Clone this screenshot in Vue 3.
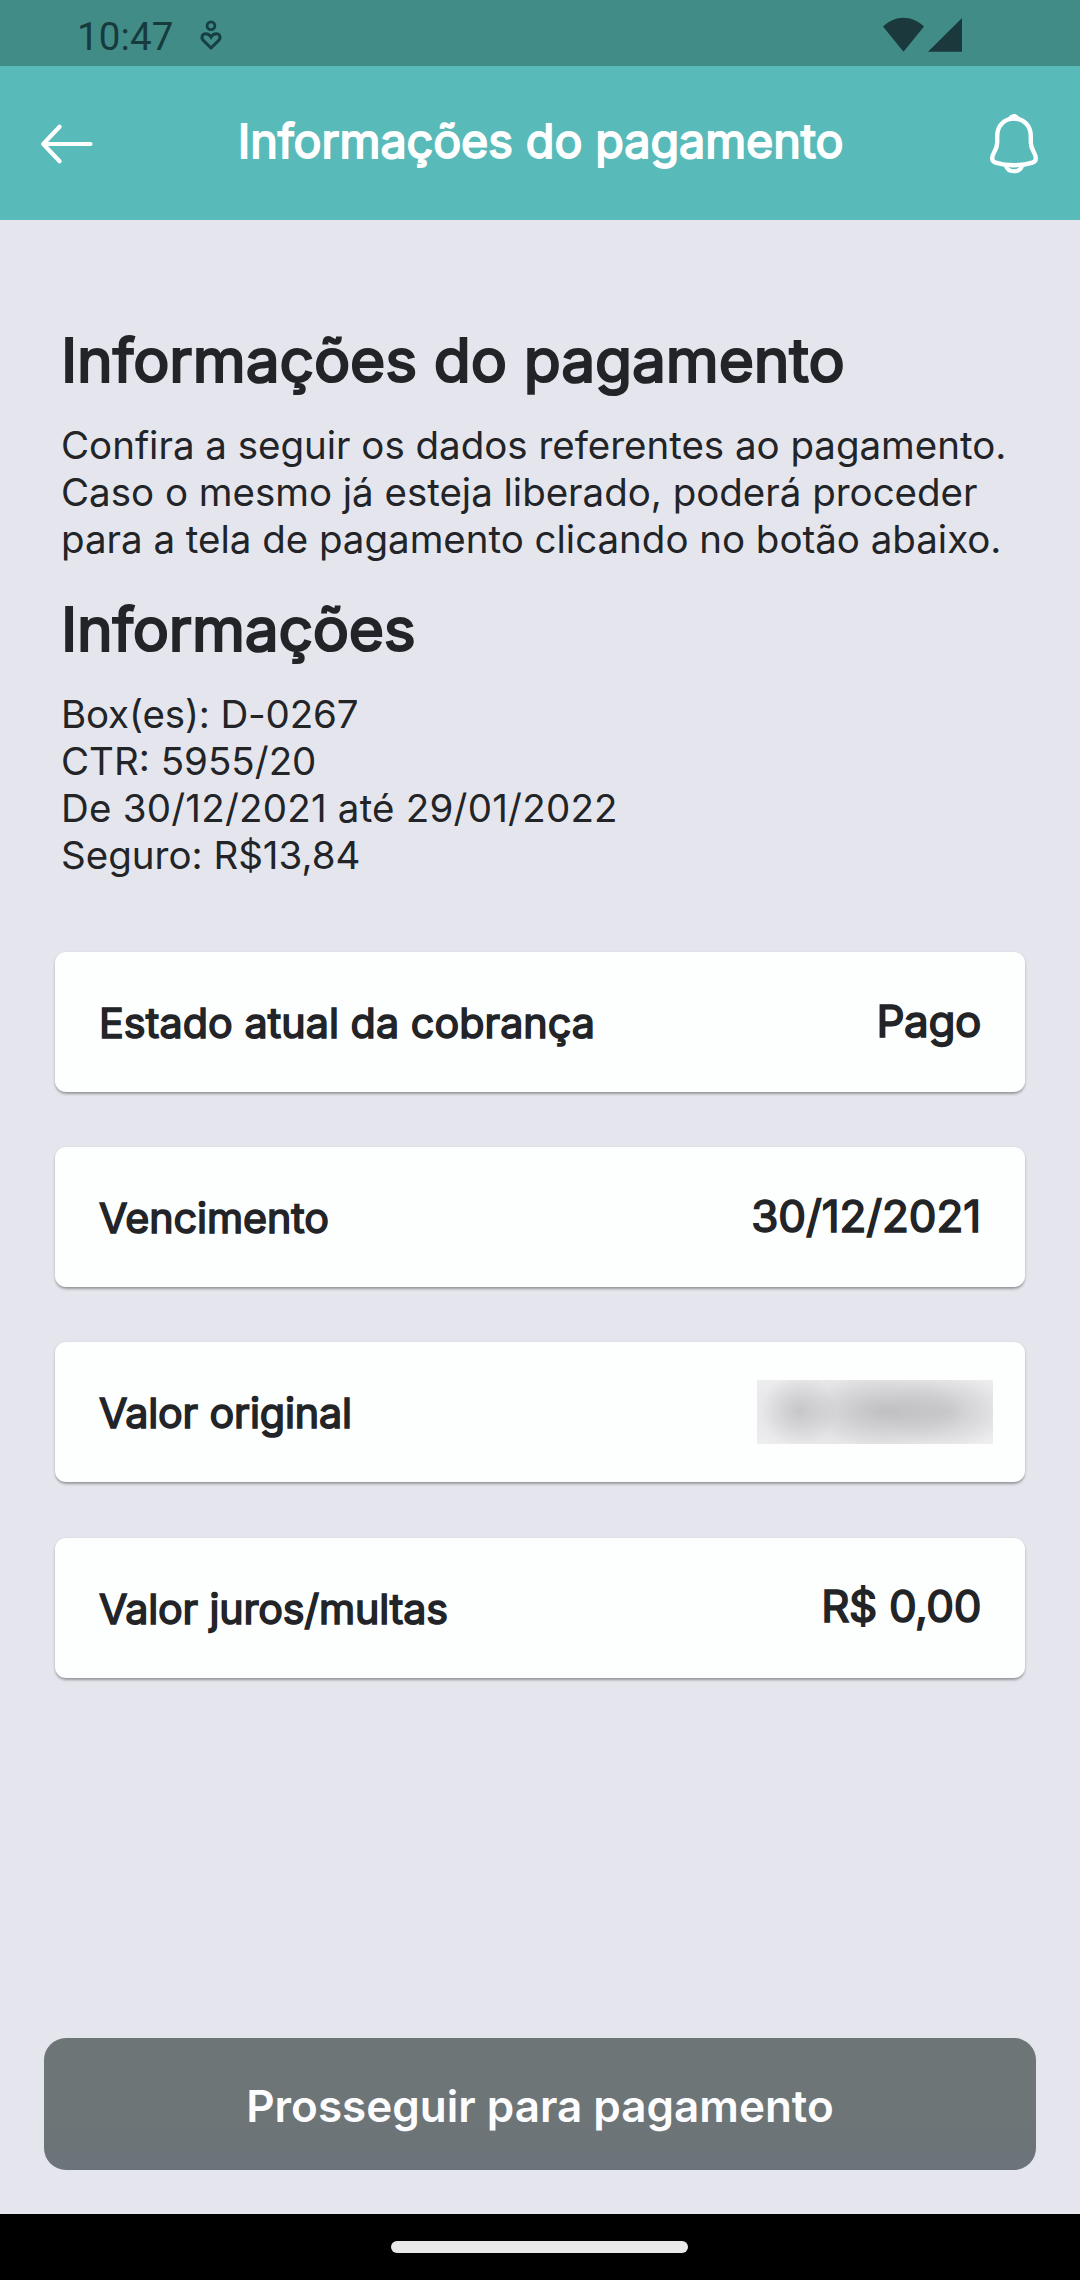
<script setup>
const details = [
  { text: 'Box(es): D-0267', fit: 'tight' },
  { text: 'CTR: 5955/20', fit: 'normal' },
  { text: 'De 30/12/2021 até 29/01/2022', fit: 'loose' },
  { text: 'Seguro: R$13,84', fit: 'normal' },
]

const rows = [
  { label: 'Estado atual da cobrança', value: 'Pago', fit: 'loose' },
  { label: 'Vencimento', value: '30/12/2021', fit: 'date' },
  { label: 'Valor original', value: null, fit: 'tight' },
  { label: 'Valor juros/multas', value: 'R$ 0,00', fit: 'tight' },
]
</script>

<template>
  <div class="screen">
    <div class="status">
      <span class="time">10:47</span>
      <svg class="wellbeing" width="24" height="32" viewBox="0 0 24 32" fill="none" stroke="#173f43">
        <circle cx="12" cy="6.7" r="3.9" stroke-width="2.8" />
        <path
          d="M12 29 L4.3 21.4 C1.6 18.6 3.3 14.7 6.8 14.7 C9.2 14.7 10.8 16 12 18 C13.2 16 14.8 14.7 17.2 14.7 C20.7 14.7 22.4 18.6 19.7 21.4 Z"
          stroke-width="3"
        />
      </svg>
      <svg class="signals" width="80" height="36" viewBox="0 0 80 36" fill="#1b393c">
        <path d="M0 9.5 C12 -2.2 29 -2.2 41 9.5 L20.5 34.8 Z" />
        <path d="M45 34.8 L79 1 V34.8 Z" />
      </svg>
    </div>

    <header class="appbar">
      <svg class="back" width="54" height="42" viewBox="0 0 54 42" fill="none" stroke="#fff" stroke-width="4.2" stroke-linecap="round" stroke-linejoin="round">
        <path d="M50.5 21 H3.500 M19.600 3.800 L3.200 21 L19.600 38.200" />
      </svg>
      <h1>Informações do pagamento</h1>
      <svg class="bell" width="50" height="62" viewBox="0 0 50 62" fill="none" stroke="#fff" stroke-width="4.4" stroke-linejoin="round">
        <path
          d="M25 5.6 C14.5 5.6 8.2 13.5 8.2 23 V29.5 C8.2 37.5 3.2 39.5 3.2 45.3 C3.2 48 4.5 49 6.6 49.6 C12 51.3 18.5 52.2 25 52.2 C31.5 52.2 38 51.3 43.4 49.6 C45.5 49 46.8 48 46.8 45.3 C46.8 39.5 41.8 37.5 41.8 29.5 V23 C41.8 13.5 35.5 5.6 25 5.6 Z"
        />
        <path d="M17.5 6 C20 3.5 22 1 25 1 C28 1 30 3.5 32.5 6 C28 7.5 22 7.5 17.5 6 Z" fill="#fff" stroke="none" />
        <path d="M17 53 C19 60 31 60 33 53" stroke-width="4.2" />
      </svg>
    </header>

    <main>
      <section class="intro">
        <h2>Informações do pagamento</h2>
        <p>
          Confira a seguir os dados referentes ao pagamento.<br />
          Caso o mesmo já esteja liberado, poderá proceder<br />
          para a tela de pagamento clicando no botão abaixo.
        </p>
        <h2 class="second">Informações</h2>
        <ul>
          <li v-for="item in details" :key="item.text" :class="item.fit">{{ item.text }}</li>
        </ul>
      </section>

      <section class="cards">
        <article v-for="row in rows" :key="row.label" class="card" :class="row.fit">
          <span class="label">{{ row.label }}</span>
          <span v-if="row.value" class="value">{{ row.value }}</span>
          <span v-else class="redacted"></span>
        </article>
      </section>

      <button class="proceed" type="button">Prosseguir para pagamento</button>
    </main>

    <footer class="nav"><span class="handle"></span></footer>
  </div>
</template>

<style>
body {
  margin: 0;
}
</style>

<style scoped>
.screen {
  display: flex;
  flex-direction: column;
  width: 1080px;
  height: 2280px;
  overflow: hidden;
  background: #e5e6ed;
  color: #222427;
  font-family: Inter, sans-serif;
}

.status {
  box-sizing: border-box;
  display: flex;
  align-items: flex-start;
  flex: none;
  height: 66px;
  padding: 0 117px 0 77px;
  background: #428c87;
}

.time {
  margin-top: 14px;
  font: 400 38.5px/45px Roboto, sans-serif;
  letter-spacing: 0.15px;
  color: #173a3d;
}

.wellbeing {
  margin: 19px 0 0 25px;
}

.signals {
  margin: 17px 0 0 auto;
}

.appbar {
  box-sizing: border-box;
  display: flex;
  align-items: center;
  justify-content: space-between;
  flex: none;
  height: 154px;
  padding: 0 41px 0 40px;
  background: #59baba;
  color: #fff;
}

.back {
  margin-top: 2px;
}

h1 {
  margin: 0 2px 3px 0;
  font-size: 46.75px;
  line-height: 57px;
  font-weight: 400;
  letter-spacing: -0.11px;
  -webkit-text-stroke: 1.8px currentColor;
}

.bell {
  margin-top: 2px;
}

main {
  box-sizing: border-box;
  display: flex;
  flex-direction: column;
  flex: 1;
  padding: 104px 44px 44px;
}

.intro {
  height: 628px;
  padding: 0 17px;
}

h2 {
  margin: 0 0 25px;
  font-size: 60.5px;
  line-height: 73px;
  font-weight: 400;
  letter-spacing: -0.15px;
  -webkit-text-stroke: 2.2px currentColor;
}

h2.second {
  margin-top: 31px;
  letter-spacing: -0.3px;
}

p,
ul {
  margin: 0;
  padding: 0;
  list-style: none;
  font-size: 38.5px;
  line-height: 46.8px;
  white-space: nowrap;
}

p {
  letter-spacing: -0.02px;
}

li.tight {
  letter-spacing: -0.15px;
}

li.loose {
  letter-spacing: 0.22px;
}

.cards {
  display: flex;
  flex-direction: column;
  gap: 55.2px;
  padding: 0 11px;
}

.card {
  box-sizing: border-box;
  display: flex;
  align-items: center;
  justify-content: space-between;
  height: 140px;
  padding: 0 44px;
  border-radius: 11px;
  background: #fdfefe;
  box-shadow:
    0 3px 3px -1px rgba(0, 0, 0, 0.28),
    0 1px 3px rgba(0, 0, 0, 0.16);
}

.label {
  margin-top: 2px;
  font-size: 41.25px;
  line-height: 50px;
  -webkit-text-stroke: 1.6px currentColor;
}

.card.loose .label {
  letter-spacing: 0.06px;
}

.card.date .label {
  letter-spacing: -0.08px;
}

.card.tight .label {
  letter-spacing: -0.16px;
}

.value {
  margin-bottom: 2px;
  font-size: 44px;
  line-height: 53px;
  letter-spacing: -0.4px;
  -webkit-text-stroke: 1.6px currentColor;
}

.card.date .value {
  letter-spacing: -0.1px;
}

.redacted {
  width: 236px;
  height: 64px;
  margin-right: -12px;
  background:
    radial-gradient(ellipse 38px 36px at 42px 31px, rgba(158, 158, 160, 0.4), transparent),
    radial-gradient(ellipse 75px 40px at 130px 31px, rgba(155, 155, 157, 0.38), transparent),
    radial-gradient(ellipse 62px 38px at 190px 31px, rgba(158, 158, 160, 0.34), transparent),
    radial-gradient(ellipse 170px 52px at 118px 31px, #d6d6d8, #f0f0f2);
}

.proceed {
  height: 132px;
  margin: auto 0 0;
  padding: 4px 0 0;
  border: 0;
  border-radius: 22px;
  background: linear-gradient(#6d7577 60%, #6c737a);
  color: #fdfdff;
  font: 600 44px/53px Inter, sans-serif;
}

.nav {
  box-sizing: border-box;
  display: flex;
  justify-content: center;
  align-items: center;
  flex: none;
  height: 66px;
  padding-right: 1px;
  background: #000;
}

.handle {
  width: 297px;
  height: 12px;
  border-radius: 6px;
  background: #e9e9e9;
}
</style>
